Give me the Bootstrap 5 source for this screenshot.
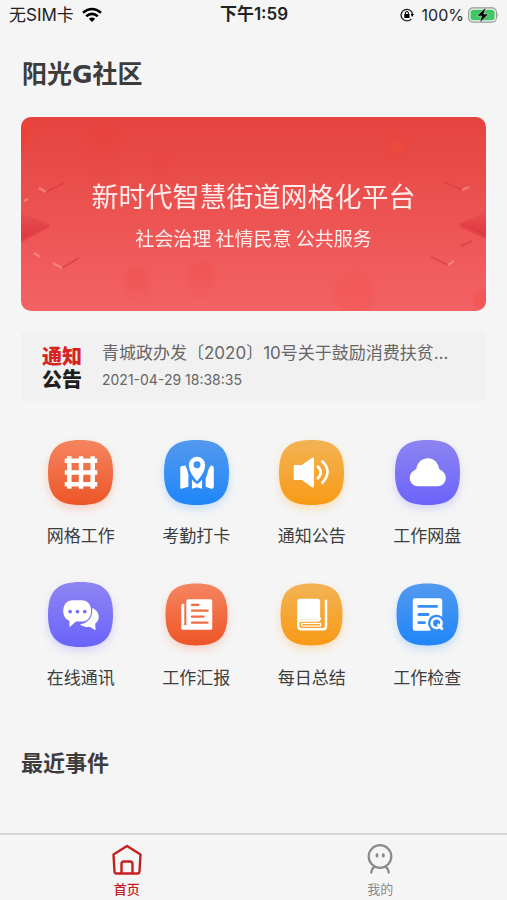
<!DOCTYPE html>
<html lang="zh-CN">
<head>
<meta charset="utf-8">
<meta name="viewport" content="width=device-width, initial-scale=1">
<title>阳光G社区</title>
<link href="https://cdn.jsdelivr.net/npm/bootstrap@5.3.0/dist/css/bootstrap.min.css" rel="stylesheet">
<style>
body { background: #f5f5f5; color: #3c3c3c; font-family: Inter, "Noto Sans CJK SC", sans-serif; }
svg { display: block; flex: none; }
.status-bar { display: grid; grid-template-columns: 1fr auto 1fr; height: 30px; padding: 0 8px 0 9px; font-size: 16px; line-height: 30px; color: #222; }
.status-text { font-size: 17px; line-height: 29px; }
.page-pad { padding: 0 21px; }
.page-title { font: 700 25px/32px "DejaVu Sans", "Noto Sans CJK SC", sans-serif; margin: 29px 0 26px; padding-left: 1px; }
.banner { height: 194px; border-radius: 10px; background: linear-gradient(#e4443f, #f46264); color: #ffeceb; font-family: "Noto Sans CJK SC", sans-serif; }
.banner-art { inset: 0; width: 100%; height: 100%; }
.banner h2 { font-size: 27px; line-height: 40px; font-weight: 400; margin: 0 0 8px; }
.banner p { font-size: 19px; line-height: 28px; margin: 0; }
.notice { margin-top: 21px; height: 69px; padding: 0 32px 0 21px; background: #f1f1f1; color: #666; text-decoration: none; }
.notice-mark { font: 900 20px/23px "Noto Sans CJK SC", sans-serif; color: #1e1e1e; margin-right: 20px; flex: none; }
.notice-mark span { color: #d8231f; }
.notice-title { font-size: 17px; line-height: 26px; }
.notice-date { font-size: 14px; line-height: 28px; }
.app-grid { padding: 39px 1px 0 2px; row-gap: 33px; }
.app-link { color: #3c3c3c; text-decoration: none; font-size: 17px; line-height: 24px; gap: 19px; }
.app-grid .col { min-height: 109px; }
.glow-orange { filter: drop-shadow(0 4px 4px #ff6a3a40); }
.glow-blue { filter: drop-shadow(0 4px 4px #3a9aff40); }
.glow-amber { filter: drop-shadow(0 4px 4px #ffb03a50); }
.glow-violet { filter: drop-shadow(0 4px 4px #7a74ff40); }
.soft-shapes { filter: blur(2px); }
.recent-title { font-size: 22px; line-height: 30px; font-weight: 700; margin: 57px 0 24px; }
.tab-bar { border-top: 2px solid #d6d6d6; height: 67px; background: #f5f5f5; }
.tab-link { color: #8a8a8a; text-decoration: none; font-size: 13px; line-height: 18px; padding-top: 8px; gap: 5px; }
.tab-link.current { color: #c3201f; font-weight: 500; }
</style>
<script src="https://cdn.jsdelivr.net/npm/bootstrap@5.3.0/dist/js/bootstrap.bundle.min.js"></script>
</head>
<body class="d-flex flex-column min-vh-100">

<svg width="0" height="0" class="position-absolute" aria-hidden="true">
  <defs>
    <linearGradient id="orange" x2="0" y2="1"><stop stop-color="#f58560"/><stop offset="1" stop-color="#ed5527"/></linearGradient>
    <linearGradient id="blue" x2="0" y2="1"><stop stop-color="#5399ee"/><stop offset="1" stop-color="#1f86fa"/></linearGradient>
    <linearGradient id="amber" x2="0" y2="1"><stop stop-color="#f2b354"/><stop offset="1" stop-color="#f99a16"/></linearGradient>
    <linearGradient id="violet" x2="0" y2="1"><stop stop-color="#8e85f2"/><stop offset="1" stop-color="#6a63fb"/></linearGradient>
    <path id="tile" d="M32 0C55 0 64 9 64 32S55 64 32 64 0 55 0 32 9 0 32 0Z"/>
    <path id="tileSmall" d="M32 1.5C54 1.5 62.5 10 62.5 32S54 62.5 32 62.5 1.5 54 1.5 32 10 1.5 32 1.5Z"/>
  </defs>
</svg>

<header class="status-bar">
  <div class="d-flex align-items-center gap-2">
    <span class="status-text">无SIM卡</span>
    <svg width="20" height="16" viewBox="0 0 20 16" fill="none" stroke="#000" stroke-width="2.6" aria-label="Wi-Fi"><path d="M1 5.8Q10-1.8 19 5.8M4.2 9.2Q10 4.4 15.8 9.2"/><path d="M10 15 6.8 11.7Q10 9.1 13.2 11.7Z" fill="#000" stroke="none"/></svg>
  </div>
  <strong class="status-text fw-semibold">下午1:59</strong>
  <div class="d-flex align-items-center justify-content-end">
    <svg class="me-2" width="14" height="14" viewBox="0 0 14 14" aria-label="方向锁定"><path d="M11.4 10.8A5.8 5.8 0 1 1 12.6 6" fill="none" stroke="#222" stroke-width="1.3"/><path d="M10.6 6h3.4l-1.8 3z"/><rect x="4.3" y="6" width="5.2" height="4" rx=".6"/><path d="M5.4 6.3V5a1.5 1.5 0 0 1 3 0v1.3" fill="none" stroke="#000"/></svg>
    <span>100%</span>
    <svg class="ms-1" width="31" height="18" viewBox="0 0 32 18" aria-label="正在充电"><rect x=".7" y="1.7" width="28.6" height="14.6" rx="4.5" fill="#f5f5f5" stroke="#8d9a90" stroke-width="1.2"/><rect x="2.6" y="3.6" width="24.8" height="10.8" rx="2.8" fill="#40c763"/><path d="M30.500 6.8q1.6 2.2 0 4.4z" fill="#8d9a90"/><path d="M18.5 1 9.3 10h4.8l-2 7 9-9h-4.8z" stroke="#f5f5f5" stroke-width=".5"/></svg>
  </div>
</header>

<main class="page-pad">
  <h1 class="page-title">阳光G社区</h1>

  <section class="banner position-relative overflow-hidden d-flex flex-column align-items-center justify-content-center text-center">
    <svg class="banner-art position-absolute" viewBox="0 0 466 194" preserveAspectRatio="none" aria-hidden="true">
      <defs>
        <linearGradient id="wing" x2="0" y2="1"><stop stop-color="#e94f50"/><stop offset="1" stop-color="#de383e"/></linearGradient>
        <linearGradient id="cornerGlow"><stop stop-color="#f53b25" stop-opacity=".7"/><stop offset="1" stop-color="#f53b25" stop-opacity="0"/></linearGradient>
        <linearGradient id="fade" x2="0" y2="1"><stop stop-color="#f03a32" stop-opacity=".22"/><stop offset="1" stop-color="#f03a32" stop-opacity="0"/></linearGradient>
      </defs>
      <g class="soft-shapes">
        <path d="M-4-4H12V22L-4 38Z" fill="url(#cornerGlow)"/>
        <rect x="66" y="12" width="32" height="54" rx="15" fill="url(#fade)"/>
        <rect x="132" y="34" width="18" height="32" rx="8" fill="url(#fade)"/>
        <rect x="104" y="152" width="24" height="36" rx="10" fill="url(#fade)"/>
        <rect x="168" y="146" width="26" height="36" rx="12" fill="url(#fade)"/>
        <circle cx="376" cy="30" r="11" fill="#f04639" opacity=".4"/>
        <circle cx="377" cy="30" r="6" fill="#ee4c40" opacity=".6"/>
        <circle cx="334" cy="176" r="20" fill="#f34c46" opacity=".25"/>
        <circle cx="463" cy="183" r="10" fill="#f04844" opacity=".4"/>
      </g>
      <path d="M0 96 28 107 0 123Z" fill="url(#wing)"/>
      <path d="M0 122 28 107V110L0 126Z" fill="#d8343b" opacity=".5"/>
      <path d="M466 94 440 107 466 119Z" fill="url(#wing)"/>
      <path d="M466 118 440 106V110L466 122Z" fill="#d8343b" opacity=".5"/>
      <g fill="none" stroke-width="1.800" opacity=".75">
        <path d="M25 75 43 66M41 151 58 141M424 65 442 73M411 140 428 148" stroke="#da3d43"/>
        <path d="M18 71 25 75M32 146 41 151M442 73 449 70M428 148 434 144M13 136 19 140M3 84 7 82" stroke="#f68e8c" stroke-width="2.400"/>
        <path d="M441 129 452 124" stroke="#e04248" stroke-width="3"/>
      </g>
    </svg>
    <h2 class="position-relative">新时代智慧街道网格化平台</h2>
    <p class="position-relative">社会治理 社情民意 公共服务</p>
  </section>

  <a href="#" class="notice d-flex align-items-center">
    <div class="notice-mark text-nowrap"><span>通知</span><br>公告</div>
    <div>
      <div class="notice-title text-nowrap">青城政办发〔2020〕10号关于鼓励消费扶贫…</div>
      <div class="notice-date">2021-04-29 18:38:35</div>
    </div>
  </a>

  <nav class="app-grid row row-cols-4 gx-0" aria-label="功能">
    <div class="col"><a href="#" class="app-link d-flex flex-column align-items-center">
      <svg class="glow-orange" width="65" height="65" viewBox="0 0 64 64" aria-hidden="true"><use href="#tile" fill="url(#orange)"/><path d="M21 16V48M32.5 16V48M44 16V48M16.5 20.5H48.500M16.500 32H48.500M16.500 43.500H48.500" stroke="#fff" stroke-width="4.400"/></svg>
      网格工作</a></div>
    <div class="col"><a href="#" class="app-link d-flex flex-column align-items-center">
      <svg class="glow-blue" width="65" height="65" viewBox="0 0 64 64" aria-hidden="true"><use href="#tile" fill="url(#blue)"/><g fill="#fff"><path d="M16 27.500Q16 26 17.500 25.500L21 25Q23.500 30 24 34V46L17.200 48Q16 48.200 16 47ZM27.500 39Q30 42 32.500 43.500 35 42.500 37.500 39V48L32.500 46.500 27.500 48ZM42.500 34Q43 29 46 25L48 25.500Q49 26 49 27.500V46Q49 48.500 46.500 48L41 46V38Z"/><path d="M32.500 40.500C28 35.500 24.500 30 24.500 24.500A8 8 0 0 1 40.500 24.500C40.500 30 37 35.500 32.500 40.500Z"/></g><circle cx="32.500" cy="24.300" r="3.400" fill="#3d92f3"/></svg>
      考勤打卡</a></div>
    <div class="col"><a href="#" class="app-link d-flex flex-column align-items-center">
      <svg class="glow-amber" width="65" height="65" viewBox="0 0 64 64" aria-hidden="true"><use href="#tile" fill="url(#amber)"/><path d="M14.500 25.500Q14.500 24.500 15.500 24.500H22.500L32.500 17.500Q34.500 16.500 34.500 18.500V45.500Q34.500 47.500 32.500 46.500L22.500 39.500H15.500Q14.500 39.500 14.500 38.500Z" fill="#fff"/><path d="M37.500 25.500Q45 32 37.500 38.500M42 20.500Q53.500 31 42 43" fill="none" stroke="#fff" stroke-width="2.600"/></svg>
      通知公告</a></div>
    <div class="col"><a href="#" class="app-link d-flex flex-column align-items-center">
      <svg class="glow-violet" width="65" height="65" viewBox="0 0 64 64" aria-hidden="true"><use href="#tile" fill="url(#violet)"/><path d="M22 45.500A8 8 0 0 1 14.500 37.500C14.500 33 17.500 30.500 21 28.500 22 22 26.500 18 32.300 18S42.500 22 43.500 28.500C47 30.500 50 33 50 37.500A8 8 0 0 1 42.500 45.500Z" fill="#fff"/></svg>
      工作网盘</a></div>
    <div class="col"><a href="#" class="app-link d-flex flex-column align-items-center">
      <svg class="glow-violet" width="65" height="65" viewBox="0 0 64 64" aria-hidden="true"><use href="#tile" fill="url(#violet)"/><path d="M43.500 25.500C48 27.500 50 30.500 50 34.500 50 37 48.500 39.500 46.500 41L46.800 47.500 41.500 44.300C37 44.700 33.500 43.500 31.500 41.500 39 40.500 44.500 35.500 43.500 25.500Z" fill="#fff"/><path d="M24.500 18H33C39 18 42.500 22.500 42.500 28.500S39 39 33 39H27.500L21.200 44.500 21 38.200C17 36.500 15 33 15 28.500 15 22.500 18.500 18 24.500 18Z" fill="#fff"/><g fill="#7770f7"><circle cx="21.800" cy="29.200" r="1.800"/><circle cx="29" cy="29.200" r="1.800"/><circle cx="36.200" cy="29.200" r="1.800"/></g></svg>
      在线通讯</a></div>
    <div class="col"><a href="#" class="app-link d-flex flex-column align-items-center">
      <svg class="glow-orange" width="65" height="65" viewBox="0 0 64 64" aria-hidden="true"><use href="#tileSmall" fill="url(#orange)"/><path d="M24 17H46Q47.500 17 47.500 18.500V45.500Q47.500 47 46 47H18.500Q17 47 17 45.500V23Q17 21.500 18.500 21.500H20V42.500H22V18.500Q22 17 24 17Z" fill="#fff"/><path d="M27.500 22.500H34M27.500 28.300H43M27.500 34.200H39M27.500 40H43" stroke="#f06d44" stroke-width="2.200" stroke-linecap="round"/></svg>
      工作汇报</a></div>
    <div class="col"><a href="#" class="app-link d-flex flex-column align-items-center">
      <svg class="glow-amber" width="65" height="65" viewBox="0 0 64 64" aria-hidden="true"><use href="#tileSmall" fill="url(#amber)"/><path d="M20.500 16.500H38Q40.500 16.500 40.500 19V37H21Q19.500 37 18 39V19Q18 16.500 20.500 16.500Z" fill="#fff"/><path d="M46.300 17.500V43.500Q46.300 46.500 43.300 46.500H22Q19 46.500 19 43V40.500Q19 38 21.500 38H37.500Q40.300 38 40.300 35" fill="none" stroke="#fff" stroke-width="2.400"/><rect x="22.500" y="40.800" width="18.500" height="2.600" fill="none" stroke="#fff" stroke-width="1.200"/></svg>
      每日总结</a></div>
    <div class="col"><a href="#" class="app-link d-flex flex-column align-items-center">
      <svg class="glow-blue" width="65" height="65" viewBox="0 0 64 64" aria-hidden="true"><use href="#tileSmall" fill="url(#blue)"/><path d="M20 16H44Q46.500 16 46.500 18.500V34H35V48H20Q17.500 48 17.500 45.500V18.500Q17.500 16 20 16Z" fill="#fff"/><path d="M23.500 24H41M23.500 32H32.500M23.500 40H29" stroke="#378ff5" stroke-width="2.800" stroke-linecap="round"/><circle cx="40.800" cy="40.500" r="8.300" fill="#348df5"/><circle cx="41" cy="40.500" r="4.800" fill="#348df5" stroke="#fff" stroke-width="2.600"/><path d="M42 41.500 47 46.800" stroke="#fff" stroke-width="2.600"/></svg>
      工作检查</a></div>
  </nav>

  <h2 class="recent-title">最近事件</h2>
</main>

<nav class="tab-bar d-flex mt-auto sticky-bottom" aria-label="主导航">
  <a href="#" class="tab-link current flex-fill w-50 d-flex flex-column align-items-center" aria-current="page">
    <svg width="32" height="32" viewBox="0 0 32 32" fill="none" stroke="currentColor" stroke-width="2.400" stroke-linejoin="round" aria-hidden="true"><path d="M16 3 29.500 11.500 28.500 28.500Q28.400 30.500 26.500 30.500H5.500Q3.600 30.500 3.500 28.500L2.500 11.500Z"/><path d="M10.500 30.500V21Q10.500 18.500 13 18.500H19Q21.500 18.500 21.500 21V30.500"/></svg>
    首页</a>
  <a href="#" class="tab-link flex-fill w-50 d-flex flex-column align-items-center">
    <svg width="32" height="32" viewBox="0 0 32 32" fill="none" stroke="currentColor" stroke-width="2.200" stroke-linecap="round" aria-hidden="true"><circle cx="16" cy="13.500" r="11.300"/><path d="M13 11.700V13.200M19.300 11.700V13.200" stroke-width="2.800"/><path d="M10.500 24Q7.500 25.500 7.300 29.700M21.500 24Q24.500 25.500 24.700 29.700"/></svg>
    我的</a>
</nav>
</body>
</html>
